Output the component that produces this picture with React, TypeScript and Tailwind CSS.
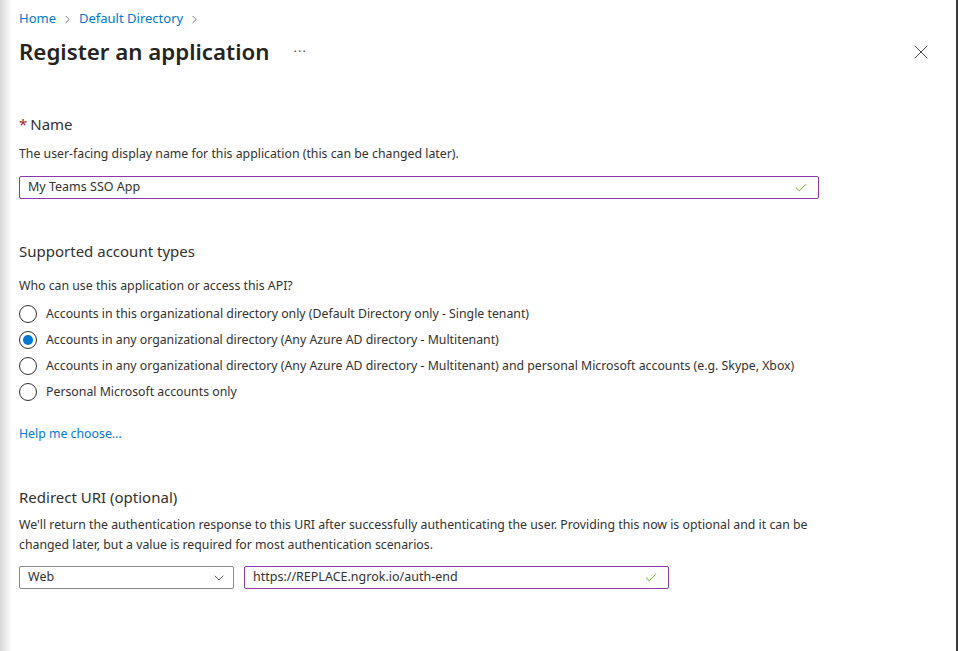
import { ChevronRight, X, Check, ChevronDown } from "lucide-react";

const options = [
	"Accounts in this organizational directory only (Default Directory only - Single tenant)",
	"Accounts in any organizational directory (Any Azure AD directory - Multitenant)",
	"Accounts in any organizational directory (Any Azure AD directory - Multitenant) and personal Microsoft accounts (e.g. Skype, Xbox)",
	"Personal Microsoft accounts only",
];

function Radio({ checked }: { checked: boolean }): React.ReactElement {
	return (
		<span className="w-[18px] h-[18px] rounded-full border border-[#323130] flex items-center justify-center shrink-0">
			{checked && <span className="w-[10px] h-[10px] rounded-full bg-[#0078d4]" />}
		</span>
	);
}

function TextField({ value, className }: { value: string; className: string }): React.ReactElement {
	return (
		<div
			className={`h-[23px] border border-[#8a3aa8] rounded-[2px] flex items-center justify-between pl-[8px] pr-[10px] ${className}`}
		>
			<span className="text-[12.5px] text-[#323130]">{value}</span>
			<Check size={14} strokeWidth={1.5} className="text-[#57a300]" />
		</div>
	);
}

export default function App(): React.ReactElement {
	return (
		<div
			className="w-[958px] h-[651px] bg-white flex text-[#323130]"
			style={{ fontFamily: '"Noto Sans", "Open Sans", sans-serif' }}
		>
			<div className="w-[12px] shrink-0 bg-gradient-to-r from-[#d8d8d8] to-white" />
			<div className="flex-1 flex flex-col pl-[7px] pr-[23px]">
				<nav className="flex items-center h-[20px] mt-[9px] text-[13px] text-[#0078d4]">
					<span>Home</span>
					<ChevronRight size={13} strokeWidth={1.5} className="text-[#605e5c] mx-[5px]" />
					<span>Default Directory</span>
					<ChevronRight size={13} strokeWidth={1.5} className="text-[#605e5c] mx-[5px]" />
				</nav>
				<header className="flex items-center h-[32px] mt-[7px]">
					<h1 className="text-[22.3px] font-semibold text-[#252423] leading-none">Register an application</h1>
					<span className="ml-[24px] text-[13px] text-[#605e5c] tracking-[1px]">···</span>
					<X size={24} strokeWidth={0.9} className="ml-auto text-[#323130]" />
				</header>

				<section className="mt-[46px]">
					<h2 className="text-[15px] leading-[20px]">
						<span className="text-[#a4262c] mr-[3px]">*</span>Name
					</h2>
					<p className="text-[12.3px] mt-[11px] leading-[18px]">
						The user-facing display name for this application (this can be changed later).
					</p>
					<TextField value="My Teams SSO App" className="w-[800px] mt-[13px]" />
				</section>

				<section className="mt-[42px]">
					<h2 className="text-[15px] leading-[20px]">Supported account types</h2>
					<p className="text-[12.3px] mt-[16px] leading-[18px]">Who can use this application or access this API?</p>
					<div className="flex flex-col mt-[6px]">
						{options.map((o, i) => (
							<label key={o} className="flex items-center h-[26px] gap-[9px]">
								<Radio checked={i === 1} />
								<span className="text-[12.3px]">{o}</span>
							</label>
						))}
					</div>
					<a className="block text-[12.3px] text-[#0078d4] mt-[20px] leading-[18px]">Help me choose...</a>
				</section>

				<section className="mt-[44px]">
					<h2 className="text-[15px] leading-[20px]">Redirect URI (optional)</h2>
					<p className="text-[12.3px] mt-[8px] leading-[19.5px] w-[820px]">
						We'll return the authentication response to this URI after successfully authenticating the user. Providing this now is optional and it can be changed later, but a value is required for most authentication scenarios.
					</p>
					<div className="flex gap-[10px] mt-[12px]">
						<div className="w-[215px] h-[23px] border border-[#8a8886] rounded-[2px] flex items-center justify-between pl-[8px] pr-[6px]">
							<span className="text-[12.5px]">Web</span>
							<ChevronDown size={16} strokeWidth={1.2} className="text-[#323130]" />
						</div>
						<TextField value="https://REPLACE.ngrok.io/auth-end" className="w-[425px]" />
					</div>
				</section>
			</div>
			<div className="w-[2px] shrink-0 bg-[#3b3a39]" />
		</div>
	);
}
